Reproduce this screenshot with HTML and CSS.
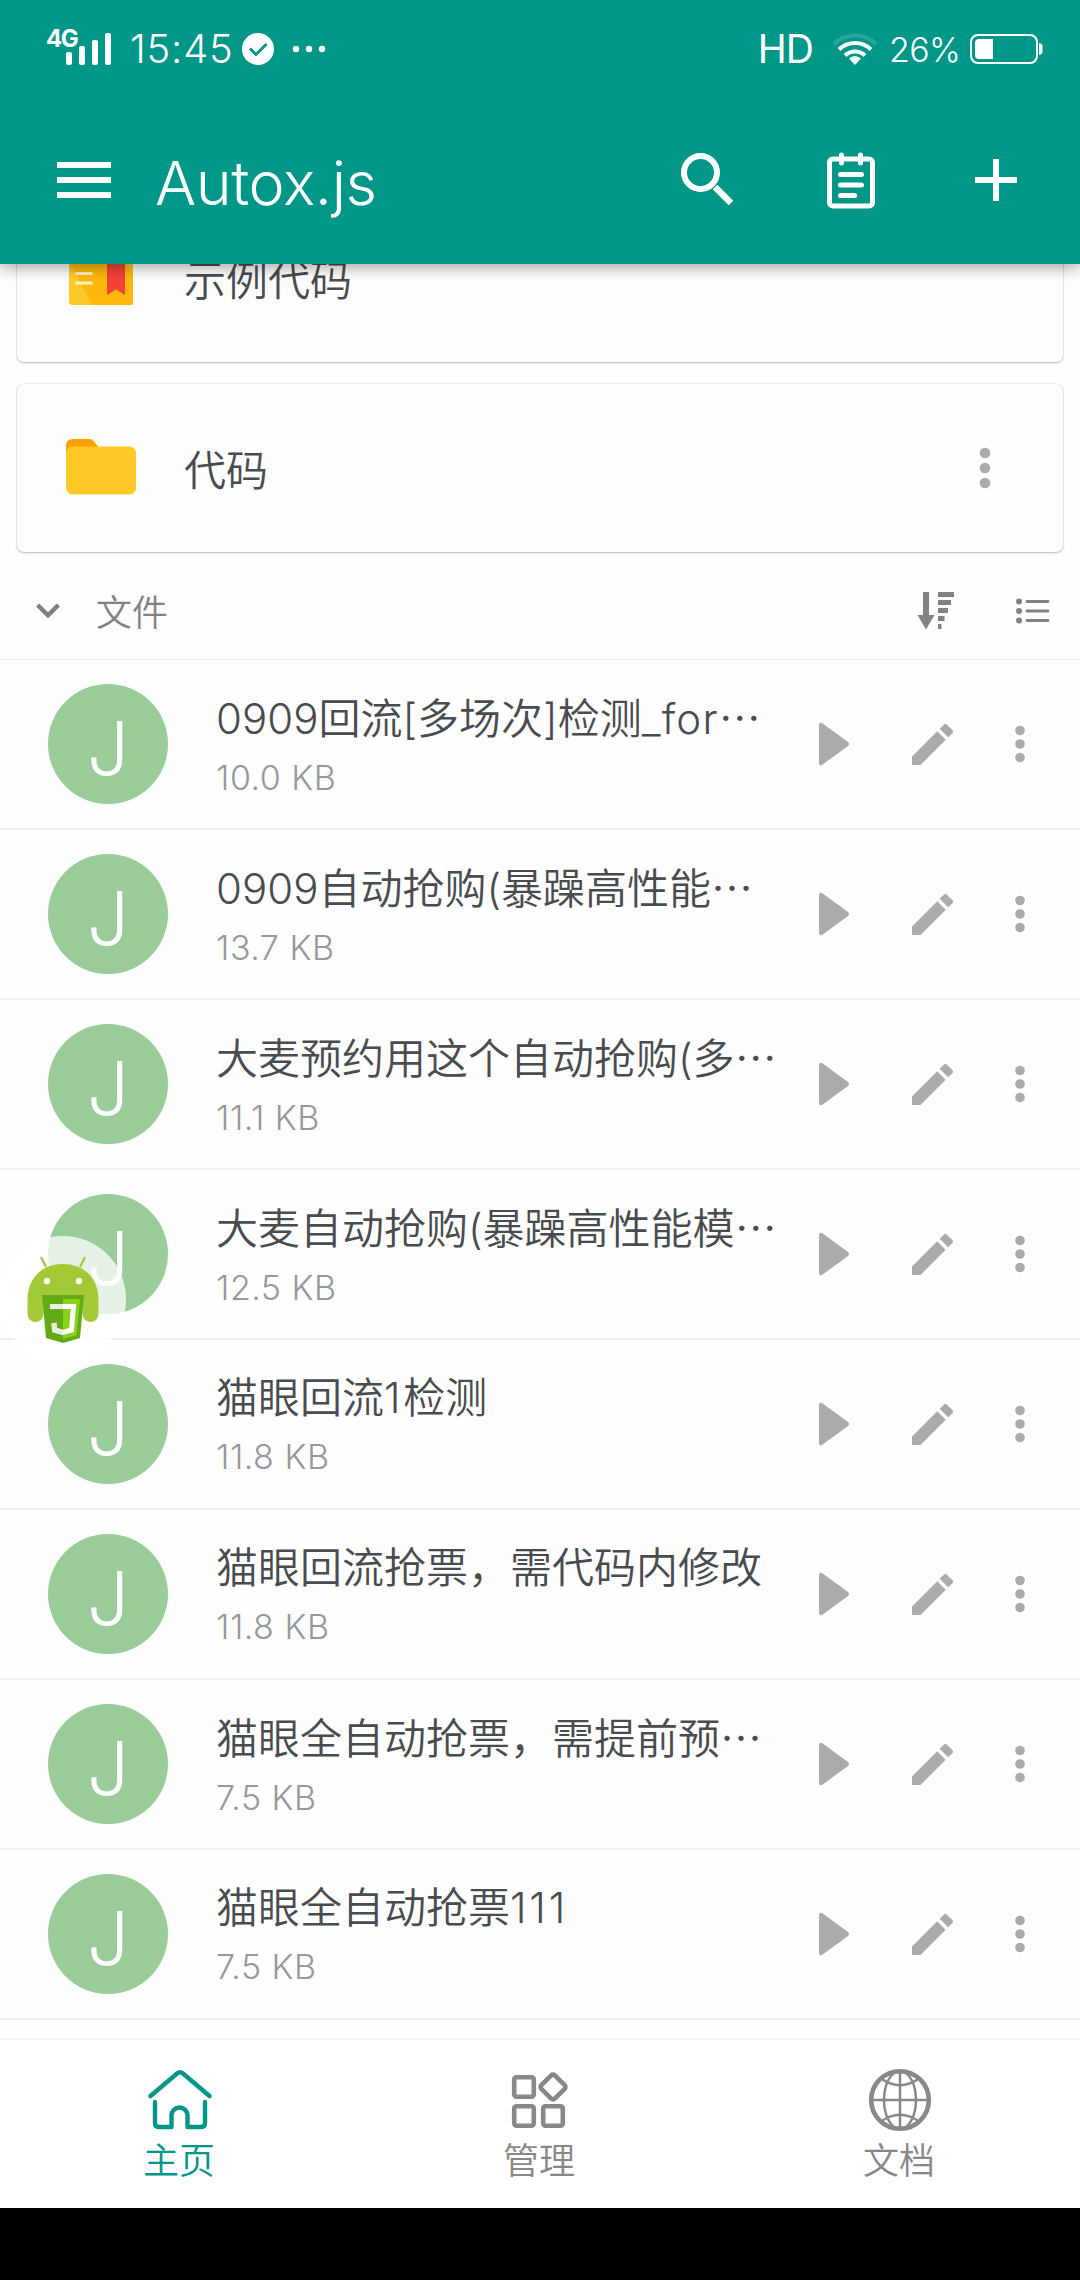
FILE: index.html
```html
<!DOCTYPE html>
<html lang="zh-CN">
<head>
<meta charset="utf-8">
<title>Autox.js</title>
<link rel="stylesheet" href="styles.css">
</head>
<body>
<svg class="sprite" width="0" height="0">
  <symbol id="play" viewBox="0 0 32 44"><path d="M1 3Q1 0 4 1L30 20Q32 22 30 24L4 43Q1 44 1 41Z"/></symbol>
  <symbol id="pencil" viewBox="3 3 18 18"><path d="M3 17.25V21h3.75L17.81 9.94l-3.75-3.75zM20.71 7.04a1 1 0 0 0 0-1.41l-2.34-2.34a1 1 0 0 0-1.41 0l-1.83 1.83 3.75 3.75z"/></symbol>
  <symbol id="dots" viewBox="0 0 10 38"><circle cx="5" cy="5.5" r="4.8"/><circle cx="5" cy="19" r="4.8"/><circle cx="5" cy="32.5" r="4.8"/></symbol>
</svg>

<header class="header">
  <div class="status">
    <svg class="signal" width="38" height="36" viewBox="0 0 38 36" fill="#fff"><rect y="21" width="6" height="13" rx="2"/><rect x="13" y="15" width="6" height="19" rx="2"/><rect x="26" y="9" width="6" height="25" rx="2"/><rect x="39" y="2" width="6" height="32" rx="2"/></svg>
    <span class="net">4G</span>
    <span class="time">15:45</span>
    <svg class="check" width="32" height="32" viewBox="0 0 32 32"><circle cx="16" cy="16" r="16" fill="#fff"/><path d="M8 15.5l6 6L24.500 11" fill="none" stroke="#009688" stroke-width="3"/></svg>
    <svg class="more" width="34" height="8" viewBox="0 0 34 8" fill="#fff"><circle cx="4" cy="4" r="3.200"/><circle cx="17" cy="4" r="3.200"/><circle cx="30" cy="4" r="3.200"/></svg>
    <span class="hd">HD</span>
    <svg class="wifi" width="46" height="34" viewBox="0 0 46 34" fill="none" stroke="#fff" stroke-width="4"><path d="M2 12a30 30 0 0 1 42 0" stroke-opacity=".16"/><path d="M7 17.500a23 23 0 0 1 32 0"/><path d="M13 23.500a14.500 14.500 0 0 1 20 0"/><path d="M23 33l-6-6.500q6-5 12 0z" fill="#fff" stroke="none"/></svg>
    <span class="percent">26%</span>
    <svg class="battery" width="73" height="32" viewBox="0 0 73 32"><rect x="1" y="2" width="66" height="28" rx="7" fill="none" stroke="#fff" stroke-width="2"/><path d="M9 6H23V26H9Q5 26 5 22V10Q5 6 9 6Z" fill="#fff"/><path d="M69 10q3.500 1 3.500 3v6q0 2-3.500 3z" fill="#fff"/></svg>
  </div>
  <div class="toolbar">
    <svg width="54" height="36" viewBox="0 0 54 36" fill="#fff"><path d="M0 0h54v6H0zM0 15h54v6H0zM0 30h54v6H0z"/></svg>
    <h1 class="title">Autox.js</h1>
    <div class="actions">
      <svg width="54" height="58" viewBox="0 0 54 58" fill="none" stroke="#fff"><circle cx="20.500" cy="21.500" r="16.500" stroke-width="6"/><path d="M35 36L51 52" stroke-width="6.500"/></svg>
      <svg width="50" height="58" viewBox="0 0 50 58" fill="none" stroke="#fff" stroke-width="5" stroke-linecap="round"><rect x="3.500" y="8" width="43" height="47" rx="3.500"/><path d="M15.500 4v8M34.500 4v8M14.500 23.500h21M14.500 34h21M14.500 44.500h14"/></svg>
      <svg class="add" width="42" height="58" viewBox="0 0 42 58" fill="#fff"><path d="M18 8h6v18h18v6H24v18h-6V32H0v-6h18z"/></svg>
    </div>
  </div>
</header>

<main class="content">
  <section class="card card-scrolled">
    <svg class="card-icon" width="72" height="72" viewBox="0 0 72 72"><rect x="4" y="4" width="64" height="60" rx="3" fill="#ffca28"/><path d="M4 20L27 64H65q3 0 3-3V30L56 18z" fill="#ffb90c"/><path d="M4 20v7l4 5z" fill="#ffca28"/><path d="M4 21h64" stroke="#f9a825" stroke-width="2"/><path d="M42 4h18v50l-9-5.500L42 54z" fill="#f44336"/><path d="M11.500 32.500h15M11.500 42h15" stroke="#fff3c0" stroke-width="3" stroke-linecap="round"/></svg>
    <span class="card-name">示例代码</span>
  </section>
  <section class="card">
    <svg class="card-icon" width="72" height="72" viewBox="0 0 72 72"><path d="M1 24V15Q1 8 8 8H25Q27 8 28.500 10L35 18 20 28z" fill="#ffa000"/><rect x="1" y="15.500" width="70" height="48" rx="6.500" fill="#ffca28"/></svg>
    <span class="card-name">代码</span>
    <svg class="card-more" width="12" height="42" viewBox="0 0 12 42"><circle cx="6" cy="6" r="5.300"/><circle cx="6" cy="21" r="5.300"/><circle cx="6" cy="36" r="5.300"/></svg>
  </section>

  <div class="section-head">
    <svg width="24" height="16" viewBox="0 0 24 16" fill="none" stroke="#808080" stroke-width="4.500"><path d="M1.600 2L12 12.300 22.400 2"/></svg>
    <span class="section-name">文件</span>
    <svg class="sort" width="38" height="40" viewBox="0 0 38 40" fill="#808284"><path d="M6 1h6v23h5.500L9 38.500.500 24H6zM21 1h16v5H21zM21 9h13v5H21zM21 17h10v5H21zM21 25h6.500v5H21zM21 33h3.500v5H21z"/></svg>
    <svg class="list-icon" width="34" height="26" viewBox="0 0 34 26" fill="#808284"><circle cx="3" cy="3.500" r="3"/><circle cx="3" cy="13" r="3"/><circle cx="3" cy="22.500" r="3"/><path d="M11 3.500h21M11 13h21M11 22.500h21" stroke="#808284" stroke-width="2.800" stroke-linecap="round"/></svg>
  </div>

  <ul class="files">
    <li class="file"><span class="avatar">J</span><div class="info"><span class="name">0909回流[多场次]检测<i class="suffix">_for</i><i class="dots3">…</i></span><span class="size">10.0 KB</span></div><svg class="play"><use href="#play"/></svg><svg class="edit"><use href="#pencil"/></svg><svg class="menu"><use href="#dots"/></svg></li>
    <li class="file"><span class="avatar">J</span><div class="info"><span class="name">0909自动抢购(暴躁高性能<i class="dots3">…</i></span><span class="size">13.7 KB</span></div><svg class="play"><use href="#play"/></svg><svg class="edit"><use href="#pencil"/></svg><svg class="menu"><use href="#dots"/></svg></li>
    <li class="file"><span class="avatar">J</span><div class="info"><span class="name">大麦预约用这个自动抢购(多<i class="dots3">…</i></span><span class="size">11.1 KB</span></div><svg class="play"><use href="#play"/></svg><svg class="edit"><use href="#pencil"/></svg><svg class="menu"><use href="#dots"/></svg></li>
    <li class="file"><span class="avatar">J</span><div class="info"><span class="name">大麦自动抢购(暴躁高性能模<i class="dots3">…</i></span><span class="size">12.5 KB</span></div><svg class="play"><use href="#play"/></svg><svg class="edit"><use href="#pencil"/></svg><svg class="menu"><use href="#dots"/></svg></li>
    <li class="file"><span class="avatar">J</span><div class="info"><span class="name">猫眼回流<i class="num">1</i>检测</span><span class="size">11.8 KB</span></div><svg class="play"><use href="#play"/></svg><svg class="edit"><use href="#pencil"/></svg><svg class="menu"><use href="#dots"/></svg></li>
    <li class="file"><span class="avatar">J</span><div class="info"><span class="name">猫眼回流抢票，需代码内修改</span><span class="size">11.8 KB</span></div><svg class="play"><use href="#play"/></svg><svg class="edit"><use href="#pencil"/></svg><svg class="menu"><use href="#dots"/></svg></li>
    <li class="file"><span class="avatar">J</span><div class="info"><span class="name">猫眼全自动抢票，需提前预<i class="dots3">…</i></span><span class="size">7.5 KB</span></div><svg class="play"><use href="#play"/></svg><svg class="edit"><use href="#pencil"/></svg><svg class="menu"><use href="#dots"/></svg></li>
    <li class="file"><span class="avatar">J</span><div class="info"><span class="name">猫眼全自动抢票<i class="num">111</i></span><span class="size">7.5 KB</span></div><svg class="play"><use href="#play"/></svg><svg class="edit"><use href="#pencil"/></svg><svg class="menu"><use href="#dots"/></svg></li>
  </ul>
</main>

<nav class="nav">
  <a class="tab active">
    <svg width="64" height="64" viewBox="0 0 64 64" fill="none" stroke="currentColor" stroke-width="4.400" stroke-linecap="round" stroke-linejoin="round"><path d="M2.500 28L29 5.500Q32 3 35 5.500L61.500 28M7 34v21q0 4 4 4h12.500V47.500a8 8 0 0 1 16 0V59H53q4 0 4-4V34"/></svg>
    <span class="tab-label">主页</span>
  </a>
  <a class="tab">
    <svg width="64" height="64" viewBox="0 0 64 64" fill="none" stroke="currentColor" stroke-width="4.600"><rect x="6.200" y="9.200" width="19.600" height="19.600" rx="2.500"/><rect x="6.200" y="38.200" width="19.600" height="19.600" rx="2.500"/><rect x="35.200" y="38.200" width="19.600" height="19.600" rx="2.500"/><rect x="35.500" y="9.500" width="19" height="19" rx="2.500" transform="rotate(45 45 19)"/></svg>
    <span class="tab-label">管理</span>
  </a>
  <a class="tab">
    <svg width="64" height="64" viewBox="0 0 64 64" fill="none" stroke="currentColor" stroke-width="2.500"><circle cx="32" cy="32" r="28.800" stroke-width="4.600"/><ellipse cx="32" cy="32" rx="16" ry="29"/><path d="M32 3v58M3 32h58M13 10.500q19 13.500 38 0M13 53.500q19-13.500 38 0"/></svg>
    <span class="tab-label">文档</span>
  </a>
</nav>
<div class="system-bar"></div>

<div class="floating">
  <svg width="126" height="126" viewBox="0 0 126 126">
    <path d="M41 21l5 10M85 21l-5 10" stroke="#a4c639" stroke-width="2.200"/>
    <path d="M27.500 64C27.500 42 42 28 63 28S98.500 42 98.500 64V78a8 8 0 0 1-16 0V59H43.500V78a8 8 0 0 1-16 0Z" fill="#a4c936"/>
    <circle cx="47" cy="45" r="3.200" fill="#fff"/><circle cx="79" cy="45" r="3.200" fill="#fff"/>
    <path d="M42 59h42l-4 43-17 5-17-5z" fill="#62aa16"/>
    <path d="M63 63h17l-3.500 36L63 103z" fill="#88d21a"/>
    <path d="M50 70.500h23.500l-2 23.500-8.500 2.500-8.500-2.500-.5-7" fill="none" stroke="#fff" stroke-width="5"/>
    <path d="M50 70.500h13M63 96.500l-8.500-2.500-.5-7" fill="none" stroke="#e8eee4" stroke-width="5"/>
  </svg>
</div>
</body>
</html>
```
FILE: styles.css
```css
* { box-sizing: border-box; }

body {
  margin: 0;
  width: 1080px;
  height: 2280px;
  position: relative;
  display: flex;
  flex-direction: column;
  overflow: hidden;
  background: #fefefe;
  font-family: Inter, "Noto Sans CJK SC", sans-serif;
  font-weight: 350;
  color: #494c4f;
}

svg { display: block; flex: none; }
.sprite { position: absolute; }

/* Header */
.header {
  flex: none;
  height: 264px;
  background: #009688;
  color: #fff;
  position: relative;
  z-index: 1;
  box-shadow: 0 4px 14px rgba(0, 0, 0, .34);
}
.status {
  height: 96px;
  display: flex;
  align-items: center;
  padding: 1px 37px 0 46px;
  line-height: 48px;
  font-weight: 400;
}
.signal { order: 1; overflow: visible; margin: 0 0 0 -9px; }
.net { font-size: 24px; font-weight: 700; letter-spacing: -1.5px; width: 29px; line-height: 24px; margin-bottom: 20px; }
.time { order: 2; margin-left: 26px; font-size: 40px; font-weight: 350; width: 106px; letter-spacing: .8px; }
.check { order: 3; margin-left: 6px; }
.more { order: 4; margin-left: 18px; }
.hd { order: 5; margin-left: auto; font-size: 39px; font-weight: 400; letter-spacing: -1px; }
.wifi { order: 6; margin-left: 19px; }
.percent { order: 7; margin: 3px 0 0 11px; font-size: 34px; font-weight: 350; width: 72px; letter-spacing: -.6px; }
.battery { order: 8; margin-left: 9px; }

.toolbar {
  height: 168px;
  display: flex;
  align-items: center;
  padding: 0 63px 0 57px;
}
.title {
  margin: 6px 0 0 44px;
  font-size: 61px;
  font-weight: 300;
  line-height: 80px;
  letter-spacing: -.4px;
}
.actions { margin-left: auto; display: flex; gap: 92px; }
.add { margin-left: 7px; }

/* Content */
.content {
  flex: none;
  height: 1775px;
  overflow: hidden;
  display: flex;
  flex-direction: column;
}
.card {
  flex: none;
  height: 168px;
  margin: 22px 17px 0;
  padding: 0 72px 0 48px;
  display: flex;
  align-items: center;
  border-radius: 7px;
  background: #fefefe;
  box-shadow: 0 0 2px rgba(0, 0, 0, .2), 0 1px 2px rgba(0, 0, 0, .22);
}
.card-scrolled { margin-top: -70px; }
.card-name { margin-left: 47px; padding-top: 5px; font-size: 42px; line-height: 60px; }
.card-icon { margin-bottom: 2px; }
.card-more { margin-left: auto; fill: #a9abad; }

.section-head {
  flex: none;
  height: 108px;
  display: flex;
  align-items: center;
  padding: 11px 30px 0 36px;
  border-bottom: 1px solid #f0f0f0;
  color: #808284;
}
.section-name { margin-left: 36px; padding-top: 4px; font-size: 36px; line-height: 52px; }
.sort { margin-left: auto; }
.list-icon { margin-left: 61px; }

.files { list-style: none; margin: 0; padding: 0; }
.file {
  height: 170px;
  display: flex;
  align-items: center;
  padding: 0 55px 0 48px;
  border-bottom: 2px solid #f0f0f1;
}
.avatar {
  flex: none;
  width: 120px;
  height: 120px;
  padding: 8px 0 0 0;
  border-radius: 50%;
  background: #9acc9a;
  color: #fff;
  font-size: 74px;
  font-weight: 300;
  line-height: 112px;
  text-align: center;
}
.info { margin-left: 48px; padding-top: 5px; width: 602px; display: flex; flex-direction: column; }
.name { font-size: 42px; line-height: 60px; white-space: nowrap; }
.name i { font-style: normal; }
.suffix { letter-spacing: 1.2px; }
.num { letter-spacing: 2.8px; }
.dots3 { font-family: "Noto Sans CJK SC", sans-serif; }
.size { font-size: 34px; font-weight: 300; line-height: 58px; color: #96999c; letter-spacing: .5px; }
.play { width: 32px; height: 44px; fill: #a9abad; }
.edit { width: 41px; height: 41px; margin-left: 62px; fill: #a9abad; }
.menu { width: 10px; height: 38px; margin-left: auto; fill: #a9abad; }

/* Bottom navigation */
.nav {
  flex: none;
  height: 169px;
  display: flex;
  border-top: 1px solid #f1f1f1;
  box-shadow: 0 -1px 3px rgba(0, 0, 0, .03);
  background: #fff;
}
.tab {
  flex: 1;
  display: flex;
  flex-direction: column;
  align-items: center;
  padding-top: 28px;
  color: #888;
  font-size: 36px;
  line-height: 54px;
}
.tab-label { padding: 2px 2px 0 0; }
.active { color: #009688; }
.system-bar { flex: none; height: 72px; background: #000; }

/* Floating script button drawn over the list */
.floating {
  position: absolute;
  left: 0;
  top: 1236px;
  width: 126px;
  height: 126px;
  border-radius: 50%;
  background: rgba(255, 255, 255, .75);
}
```
